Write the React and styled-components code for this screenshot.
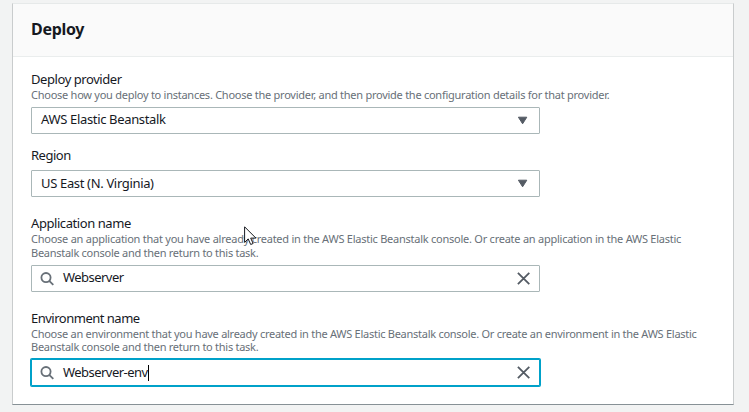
import React from "react";
import styled, { createGlobalStyle, css } from "styled-components";

const GlobalStyle = createGlobalStyle`
  * { box-sizing: border-box; }
  body {
    margin: 0;
    background: #f2f3f3;
    color: #16191f;
    font-family: "Noto Sans", "Open Sans", sans-serif;
    overflow: hidden;
  }
`;

const Page = styled.main`
  position: relative;
  height: 412px;
  padding: 3px 15px 0 12px;
`;

const Panel = styled.section`
  height: 402px;
  background: #fff;
  border: 1px solid #c9cccd;
  border-top-color: #e6e9e9;
  border-bottom-color: #879196;
`;

const PanelHeader = styled.header`
  display: flex;
  align-items: center;
  height: 53px;
  padding: 0 0 2px 18px;
  background: #fafafa;
  border-bottom: 1px solid #eaeded;
`;

const Title = styled.h2`
  margin: 0;
  font-size: 16px;
  line-height: 20px;
  font-weight: 700;
  letter-spacing: -0.3px;
`;

const Form = styled.div`
  padding: 14px 0 0 18px;
`;

const Field = styled.div`
  margin-bottom: ${(p) => p.$after ?? 18}px;
`;

const Label = styled.label`
  display: block;
  height: 17px;
  font-size: 13px;
  line-height: 16px;
  white-space: nowrap;
  letter-spacing: ${(p) => p.$spacing ?? -0.43}px;
`;

const Help = styled.div`
  height: ${(p) => p.$height || 14}px;
  color: #687078;
  font-size: 11px;
  line-height: ${(p) => p.$line || 14}px;
`;

const HelpLine = styled.div`
  white-space: nowrap;
  letter-spacing: ${(p) => p.$spacing ?? -0.27}px;
`;

const Control = styled.div`
  display: flex;
  align-items: center;
  width: 509px;
  height: 27px;
  margin-top: ${(p) => p.$gap ?? 5}px;
  padding: 0 8px 0 9px;
  background: #fff;
  border: 1px solid #aab7b8;
  border-radius: 1px;
  ${(p) =>
    p.$focused &&
    css`
      border-color: #00a1c9;
      box-shadow: 0 0 0 1px #00a1c9;
    `}
`;

const Value = styled.span`
  padding-bottom: ${(p) => p.$lift ?? 2}px;
  font-size: 13px;
  line-height: 16px;
  white-space: nowrap;
  letter-spacing: ${(p) => p.$spacing ?? -0.34}px;
`;

const Caret = styled.span`
  width: 1px;
  height: 16px;
  background: #000;
`;

const EndIcon = styled.svg`
  margin-left: auto;
`;

const LeadIcon = styled.svg`
  margin-left: -1px;
  margin-right: 9px;
`;

const Pointer = styled.svg`
  position: absolute;
  left: 244px;
  top: 226px;
`;

const Arrow = () => (
  <EndIcon width="16" height="10" viewBox="0 0 16 10">
    <path d="M3.4 1.2h8.4L7.6 7.8z" fill="#545b64" stroke="#545b64" strokeLinejoin="round" />
  </EndIcon>
);

const Search = () => (
  <LeadIcon width="14" height="14" viewBox="0 0 14 14" fill="none" stroke="#687078" strokeWidth="1.8">
    <circle cx="6" cy="5.6" r="4.6" />
    <path d="M9.2 8.8l4.1 4" />
  </LeadIcon>
);

const Clear = () => (
  <EndIcon width="14" height="14" viewBox="0 0 14 14" stroke="#545b64" strokeWidth="1.8">
    <path d="M.9 .9l11.4 11.2M12.3 .9L.9 12.1" />
  </EndIcon>
);

export default function App() {
  return (
    <>
      <GlobalStyle />
      <Page>
        <Panel>
          <PanelHeader>
            <Title>Deploy</Title>
          </PanelHeader>
          <Form>
            <Field $after={13}>
              <Label>Deploy provider</Label>
              <Help>
                <HelpLine $spacing={-0.257}>
                  Choose how you deploy to instances. Choose the provider, and then provide the configuration details for that provider.
                </HelpLine>
              </Help>
              <Control>
                <Value $lift={3}>AWS Elastic Beanstalk</Value>
                <Arrow />
              </Control>
            </Field>
            <Field>
              <Label $spacing={-0.5}>Region</Label>
              <Control $gap={6}>
                <Value $lift={1}>US East (N. Virginia)</Value>
                <Arrow />
              </Control>
            </Field>
            <Field>
              <Label>Application name</Label>
              <Help $height={28}>
                <HelpLine $spacing={-0.245}>
                  Choose an application that you have already created in the AWS Elastic Beanstalk console. Or create an application in the AWS Elastic
                </HelpLine>
                <HelpLine>Beanstalk console and then return to this task.</HelpLine>
              </Help>
              <Control>
                <Search />
                <Value $lift={3} $spacing={-0.54}>Webserver</Value>
                <Clear />
              </Control>
            </Field>
            <Field>
              <Label $spacing={-0.5}>Environment name</Label>
              <Help $height={27} $line={13}>
                <HelpLine $spacing={-0.27}>
                  Choose an environment that you have already created in the AWS Elastic Beanstalk console. Or create an environment in the AWS Elastic
                </HelpLine>
                <HelpLine>Beanstalk console and then return to this task.</HelpLine>
              </Help>
              <Control $focused>
                <Search />
                <Value $spacing={-0.54}>Webserver-env</Value>
                <Caret />
                <Clear />
              </Control>
            </Field>
          </Form>
        </Panel>
        <Pointer width="13" height="20" viewBox="0 0 13 20">
          <path d="M.6.8v15.6l3.6-3.5 2.5 5.6 2.4-1-2.4-5.4h5.2z" fill="#fff" stroke="#16191f" />
        </Pointer>
      </Page>
    </>
  );
}
